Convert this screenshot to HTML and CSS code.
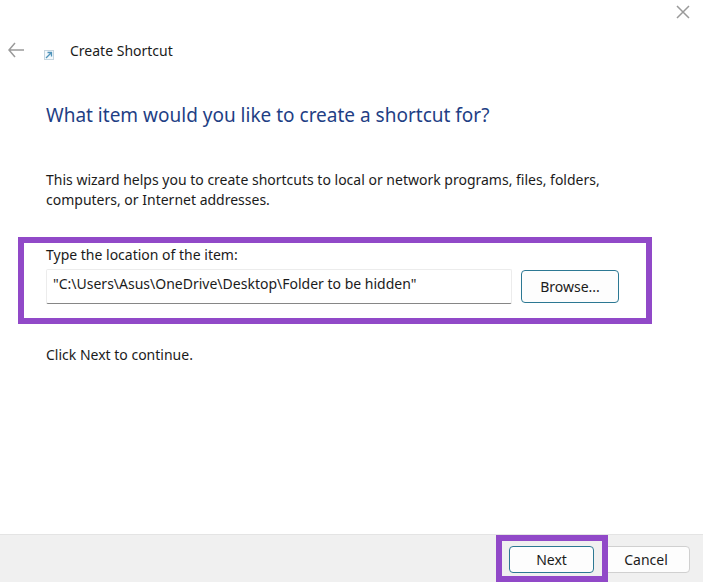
FILE: index.html
```
<!DOCTYPE html>
<html lang="en">
<head>
<meta charset="utf-8">
<meta name="viewport" content="width=device-width, initial-scale=1">
<title>Create Shortcut</title>
<link rel="stylesheet" href="styles.css">
</head>
<body>

<form class="wizard">
  <div class="titlebar">
    <button class="icon-button" type="button" aria-label="Close">
      <svg width="14" height="14" viewBox="0 0 14 14"><path d="M1 1l12 12M13 1L1 13"/></svg>
    </button>
  </div>

  <header class="wizard-header">
    <button class="icon-button back" type="button" aria-label="Back">
      <svg width="18" height="16" viewBox="0 0 18 16"><path d="M16 8H1M7 1L1 8l6 7"/></svg>
    </button>
    <svg class="shortcut-icon" width="10" height="10" viewBox="0 0 10 10">
      <rect x="0.5" y="0.5" width="9" height="9"/>
      <path d="M2 8l5-5M3.500 2.500h4v4"/>
    </svg>
    <span class="wizard-name">Create Shortcut</span>
  </header>

  <main class="wizard-body">
    <h1>What item would you like to create a shortcut for?</h1>
    <p class="intro">This wizard helps you to create shortcuts to local or network programs, files, folders, computers, or Internet addresses.</p>
    <div class="location highlight">
      <label for="location">Type the location of the item:</label>
      <div class="location-row">
        <input id="location" type="text" value="&quot;C:\Users\Asus\OneDrive\Desktop\Folder to be hidden&quot;">
        <button class="button browse primary" type="button">Browse...</button>
      </div>
    </div>
    <p>Click Next to continue.</p>
  </main>

  <footer class="wizard-footer">
    <div class="next highlight">
      <button class="button primary" type="submit">Next</button>
    </div>
    <button class="button cancel" type="button">Cancel</button>
  </footer>
</form>

</body>
</html>
```

FILE: styles.css
```
* {
  box-sizing: border-box;
}

body {
  margin: 0;
  background-color: white;
  color: #1b1b1b;
  font-family: "Segoe UI", "Noto Sans", "Open Sans", sans-serif;
  font-size: 14px;
  line-height: 20px;
}

h1, p {
  margin: 0;
}

.wizard {
  display: flex;
  flex-direction: column;
  min-height: 100vh;
}

.titlebar {
  display: flex;
  justify-content: flex-end;
  padding: 5px 13px 0 0;
}

.icon-button {
  display: flex;
  padding: 0;
  border: none;
  background: none;
}

.icon-button path {
  fill: none;
  stroke: #9a9a9a;
  stroke-width: 1.5;
}

.wizard-header {
  display: flex;
  align-items: center;
  padding: 22px 8px 0;
}

.back {
  margin-bottom: 2px;
}

.shortcut-icon {
  margin: 8px 16px 0 18px;
}

.shortcut-icon rect {
  fill: #f4f9fc;
  stroke: #c5d5df;
}

.shortcut-icon path {
  fill: none;
  stroke: #4f93ba;
  stroke-width: 1.3;
}

.wizard-body {
  flex: 1;
  padding: 41px 46px 24px;
}

h1 {
  color: #1f3f85;
  font-size: 19px;
  font-weight: normal;
  line-height: 26px;
}

.intro {
  max-width: 580px;
  margin-top: 42px;
}

.highlight {
  border: 6px solid #9149c8;
}

.location {
  margin: 27px 5px 21px -28px;
  padding: 2px 27px 14px 22px;
}

.location label {
  display: block;
}

.location-row {
  display: flex;
  align-items: center;
  gap: 9px;
  margin-top: 4px;
}

.location input {
  flex: 1;
  min-width: 0;
  height: 35px;
  padding: 0 6px 7px;
  border: 1px solid #ececec;
  border-bottom-color: #868686;
  border-radius: 2px;
  background-color: white;
  color: inherit;
  font: inherit;
}

.button {
  height: 27px;
  padding: 0;
  border: 1px solid #d0d0d0;
  border-radius: 4px;
  background-color: #fdfdfd;
  color: inherit;
  font: inherit;
}

.button.primary {
  border-color: #2c7893;
}

.button.browse {
  width: 98px;
  height: 33px;
}

.wizard-footer {
  display: flex;
  align-items: center;
  justify-content: flex-end;
  padding-right: 13px;
  border-top: 1px solid #e4e4e4;
  background-color: #f0f0f0;
}

/* the highlight frame sits over the left edge of Cancel */
.next {
  z-index: 1;
  margin-right: -6px;
  padding: 5px 8px 3px 7px;
}

.next .button {
  display: block;
  width: 85px;
}

.cancel {
  width: 88px;
  margin-top: 2px;
}
```
